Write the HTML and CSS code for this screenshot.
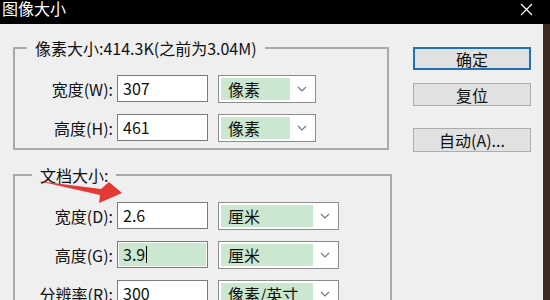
FILE: index.html
```html
<!DOCTYPE html>
<html lang="zh-CN">
<head>
    <meta charset="UTF-8">
    <title>图像大小</title>
    <link rel="stylesheet" href="styles.css">
</head>
<body>

    <div class="title-bar">
        <span class="title">图像大小</span>
        <svg class="close" width="13" height="13" viewBox="0 0 13 13">
            <path d="M1 1 L12 12 M12 1 L1 12" stroke="#fff" stroke-width="1.2" fill="none"/>
        </svg>
    </div>

    <div class="dialog">
        <div class="groups">
            <!-- 像素大小 -->
            <fieldset class="group group-pixels">
                <legend>像素大小:414.3K(之前为3.04M)</legend>
                <div class="row">
                    <label>宽度(W):</label>
                    <div class="field">307</div>
                    <div class="select"><span class="sel-text">像素</span><span class="chev"><svg width="10" height="6" viewBox="0 0 10 6"><path d="M1 1 L5 5 L9 1" stroke="#777" stroke-width="1.2" fill="none"/></svg></span></div>
                </div>
                <div class="row">
                    <label>高度(H):</label>
                    <div class="field">461</div>
                    <div class="select"><span class="sel-text">像素</span><span class="chev"><svg width="10" height="6" viewBox="0 0 10 6"><path d="M1 1 L5 5 L9 1" stroke="#777" stroke-width="1.2" fill="none"/></svg></span></div>
                </div>
            </fieldset>

            <!-- 文档大小 -->
            <fieldset class="group group-doc">
                <legend>文档大小:</legend>
                <div class="row">
                    <label>宽度(D):</label>
                    <div class="field">2.6</div>
                    <div class="select"><span class="sel-text">厘米</span><span class="chev"><svg width="10" height="6" viewBox="0 0 10 6"><path d="M1 1 L5 5 L9 1" stroke="#777" stroke-width="1.2" fill="none"/></svg></span></div>
                </div>
                <div class="row">
                    <label>高度(G):</label>
                    <div class="field field-active">3.9<span class="caret"></span></div>
                    <div class="select"><span class="sel-text">厘米</span><span class="chev"><svg width="10" height="6" viewBox="0 0 10 6"><path d="M1 1 L5 5 L9 1" stroke="#777" stroke-width="1.2" fill="none"/></svg></span></div>
                </div>
                <div class="row">
                    <label>分辨率(R):</label>
                    <div class="field">300</div>
                    <div class="select"><span class="sel-text">像素/英寸</span><span class="chev"><svg width="10" height="6" viewBox="0 0 10 6"><path d="M1 1 L5 5 L9 1" stroke="#777" stroke-width="1.2" fill="none"/></svg></span></div>
                </div>
            </fieldset>
        </div>

        <div class="buttons">
            <button class="btn btn-default">确定</button>
            <button class="btn">复位</button>
            <button class="btn btn-auto">自动(A)...</button>
        </div>

        <!-- red annotation arrow -->
        <svg class="arrow" width="100" height="40" viewBox="30 170 100 40">
            <polygon points="38,181 101,189 109,182 122,193 99,203 100,195" fill="#e53935"/>
        </svg>
    </div>

</body>
</html>
```

FILE: styles.css
```css
:root {
    --bg: #efefef;
    --border: #a9a9a9;
    --green: #cbe7d0;
    --txt: #111;
}

body {
    margin: 0;
    width: 550px;
    height: 300px;
    overflow: hidden;
    background-color: #3a2b22;
    font-family: "Noto Sans CJK SC", "Noto Sans", sans-serif;
    font-size: 16px;
    color: var(--txt);
}

.title-bar {
    height: 24px;
    background-color: #000;
    display: flex;
    justify-content: space-between;
    align-items: flex-start;
}

.title {
    color: #fff;
    line-height: 16px;
    margin-left: 2px;
}

.close {
    margin-top: 3px;
    margin-right: 17px;
}

.dialog {
    position: relative;
    width: 543px;
    height: 276px;
    background-color: var(--bg);
    display: flex;
}

.groups {
    padding-left: 13px;
}

.group {
    box-sizing: border-box;
    margin: 0;
    border: 2px solid var(--border);
    padding: 17px 0 7px 12px;
}

.group-pixels {
    width: 376px;
    margin-top: 14px;
}

.group-doc {
    width: 379px;
    margin-top: 15px;
}

.group legend {
    line-height: 20px;
    padding: 0 8px;
}

.group-doc legend {
    margin-left: 5px;
}

.row {
    display: flex;
    align-items: center;
    height: 27px;
    margin-bottom: 12px;
}

.row:last-child {
    margin-bottom: 0;
}

.row label {
    width: 86px;
    margin-right: 4px;
    text-align: right;
    white-space: nowrap;
}

.field {
    box-sizing: border-box;
    width: 91px;
    height: 27px;
    border: 1px solid #7a7a7a;
    background-color: #fff;
    padding-left: 5px;
    line-height: 25px;
    display: flex;
    align-items: center;
}

.field-active {
    background-color: var(--green);
    box-shadow: inset 0 0 0 1px #fff;
}

.caret {
    display: inline-block;
    width: 1px;
    height: 17px;
    background-color: #000;
    margin-left: 1px;
}

.select {
    box-sizing: border-box;
    width: 98px;
    height: 28px;
    margin-left: 10px;
    border: 1px solid #8c8c8c;
    background-color: #fff;
    padding: 2px;
    display: flex;
}

.group-doc .select {
    width: 121px;
}

.sel-text {
    flex: 1;
    background-color: var(--green);
    padding-left: 7px;
    line-height: 22px;
}

.chev {
    width: 23px;
    display: flex;
    align-items: center;
    justify-content: center;
}

.buttons {
    margin-left: 21px;
    padding-top: 23px;
    display: flex;
    flex-direction: column;
}

.btn {
    box-sizing: border-box;
    width: 118px;
    height: 23px;
    margin: 0 0 13px;
    padding: 0;
    border: 1px solid #adadad;
    background-color: #e1e1e1;
    font-family: inherit;
    font-size: 16px;
    line-height: 20px;
    color: var(--txt);
}

.btn-default {
    border: 2px solid #1f72b8;
}

.btn-auto {
    height: 24px;
    margin-top: 9px;
}

.arrow {
    position: absolute;
    left: 30px;
    top: 146px;
}
```
